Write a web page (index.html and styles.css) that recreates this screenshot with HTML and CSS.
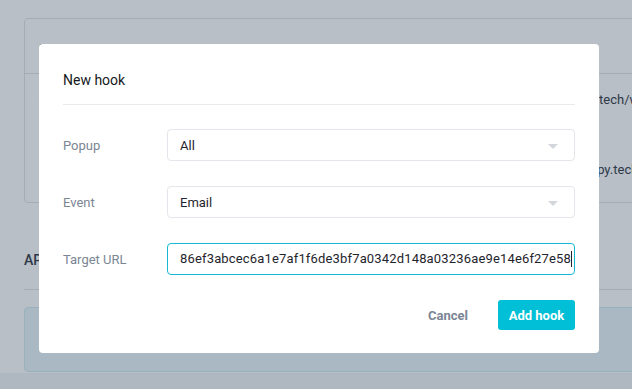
FILE: index.html
```html
<!DOCTYPE html>
<html lang="en">

<head>
    <meta charset="UTF-8">
    <meta name="viewport" content="width=device-width, initial-scale=1.0">
    <title>Hooks</title>
    <link rel="stylesheet" href="styles.css">
</head>

<body>
    <div class="page">
        <div class="hooks-card">
            <div class="hooks-row hooks-head">
                <div>Popup</div>
                <div>Event</div>
                <div>Target URL</div>
            </div>
            <div class="hooks-row">
                <div>All</div>
                <div>Email</div>
                <div>https://hooks.happypopups.co.tech/webhooks</div>
            </div>
            <div class="hooks-row">
                <div>Newsletter</div>
                <div>Email</div>
                <div>https://notifications-center.happy.tech/hook</div>
            </div>
        </div>
        <h2 class="section-title">API key</h2>
        <div class="key-box"></div>
    </div>
    <div class="footer"></div>

    <div class="overlay">
        <div class="modal">
            <div class="modal-title">New hook</div>
            <div class="form">
                <div class="form-row">
                    <label>Popup</label>
                    <div class="select">All<span class="caret"></span></div>
                </div>
                <div class="form-row">
                    <label>Event</label>
                    <div class="select">Email<span class="caret"></span></div>
                </div>
                <div class="form-row">
                    <label>Target URL</label>
                    <div class="input focused"><span class="value">86ef3abcec6a1e7af1f6de3bf7a0342d148a03236ae9e14e6f27e58</span></div>
                </div>
            </div>
            <div class="actions">
                <button class="btn-cancel">Cancel</button>
                <button class="btn-primary">Add hook</button>
            </div>
        </div>
    </div>
</body>

</html>
```

FILE: styles.css
```css
* {
    box-sizing: border-box;
}

body {
    margin: 0;
    background: #ffffff;
    font-family: Roboto, "Liberation Sans", sans-serif;
    color: #2b3139;
    height: 389px;
    overflow: hidden;
}

.page {
    padding: 18px 0 0 24px;
    height: 373px;
}

.hooks-card {
    width: 640px;
    height: 185px;
    border: 1px solid #dfe3e8;
    border-radius: 4px;
    font-size: 13px;
    overflow: hidden;
}

.hooks-row {
    display: grid;
    grid-template-columns: 190px 190px 1fr;
    padding: 18px 14px 0;
    height: 70px;
    line-height: 16px;
    white-space: nowrap;
    color: #2b3139;
}

.hooks-head {
    height: 55px;
    padding-top: 22px;
    color: #8a94a3;
    border-bottom: 1px solid #dfe3e8;
}

.section-title {
    margin: 0;
    padding: 49px 0 17px;
    height: 87px;
    font-size: 14px;
    font-weight: 500;
    color: #2b3139;
    border-bottom: 1px solid #dfe3e8;
}

.key-box {
    margin-top: 17px;
    height: 65px;
    width: 620px;
    border: 1px solid #cdebf0;
    background: #e9f5f8;
    border-radius: 4px;
}

.footer {
    height: 16px;
    background: #f1f3f5;
}

.overlay {
    position: fixed;
    top: 0;
    left: 0;
    width: 100%;
    height: 100%;
    background: rgba(52, 73, 94, 0.35);
}

.modal {
    position: absolute;
    top: 44px;
    left: 39px;
    width: 560px;
    height: 309px;
    background: #ffffff;
    border-radius: 4px;
    padding: 0 24px;
}

.modal-title {
    padding: 24px 0 12px;
    line-height: 24px;
    font-size: 14px;
    color: #151a20;
    border-bottom: 1px solid #e8ebee;
}

.form {
    padding-top: 24px;
    display: flex;
    flex-direction: column;
    gap: 25px;
}

.form-row {
    display: flex;
    align-items: center;
}

.form-row label {
    width: 104px;
    font-size: 13px;
    color: #7b8694;
}

.select,
.input {
    position: relative;
    flex: 1;
    height: 32px;
    border: 1px solid #e3e6ea;
    border-radius: 4px;
    padding: 0 12px;
    display: flex;
    align-items: center;
    font-size: 13px;
    color: #1f252c;
    overflow: hidden;
    white-space: nowrap;
}

.input.focused {
    border-color: #17b9d2;
}

.value {
    border-right: 1px solid #1f252c;
    line-height: 16px;
    letter-spacing: 0.16px;
}

/* little dropdown triangle */
.caret {
    position: absolute;
    right: 16px;
    top: 14px;
    border-left: 5px solid transparent;
    border-right: 5px solid transparent;
    border-top: 5px solid #d3d7dc;
}

.actions {
    display: flex;
    justify-content: flex-end;
    align-items: center;
    gap: 18px;
    padding-top: 25px;
}

.actions button {
    font-family: Roboto, "Liberation Sans", sans-serif;
    font-size: 13px;
    font-weight: 700;
    border: none;
    height: 30px;
    border-radius: 3px;
    cursor: pointer;
}

.btn-cancel {
    background: none;
    color: #7b8694;
    padding: 0 12px;
}

.btn-primary {
    background: #00bfd6;
    color: #ffffff;
    width: 77px;
}
```
